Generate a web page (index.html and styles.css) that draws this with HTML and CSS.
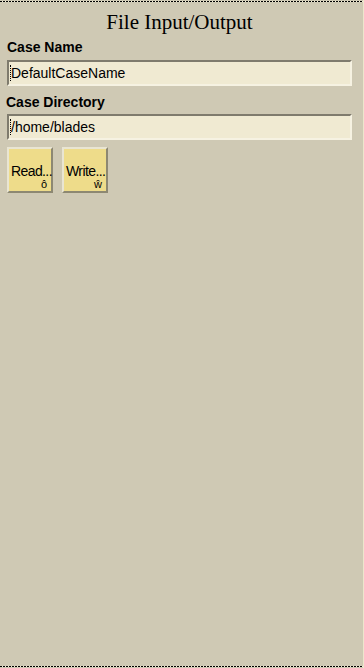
FILE: index.html
```
<!DOCTYPE html>
<html lang="en">
  <head>
    <meta charset="UTF-8" />
    <meta name="viewport" content="width=device-width, initial-scale=1.0" />
    <title>File Input/Output</title>
    <link rel="stylesheet" href="styles.css">
  </head>
  <body>
    <div class="window">
      <div class="rule"></div>

      <div class="panel">
        <h1 class="title">File Input/Output</h1>

        <label class="field-label" for="caseName">Case Name</label>
        <div class="field">
          <input type="text" id="caseName" value="DefaultCaseName" />
        </div>

        <label class="field-label" for="caseDir">Case Directory</label>
        <div class="field field-dir">
          <input type="text" id="caseDir" value="/home/blades" />
        </div>

        <div class="button-row">
          <button class="btn">
            <span class="btn-text">Read...</span>
            <span class="btn-key">ô</span>
          </button>
          <button class="btn">
            <span class="btn-text">Write...</span>
            <span class="btn-key">ŵ</span>
          </button>
        </div>
      </div>

      <div class="rule"></div>
    </div>
  </body>
</html>
```

FILE: styles.css
```
* {
  margin: 0;
  padding: 0;
  box-sizing: border-box;
}

body {
  background-color: #cfc9b4;
  font-family: "Liberation Sans", Arial, sans-serif;
  color: #000;
}

.window {
  height: 668px;
  display: flex;
  flex-direction: column;
  padding: 1px 0 1px 0;
  border-right: 1px solid #ece6cc;
}

.rule {
  height: 1px;
  background: repeating-linear-gradient(90deg, #000 0 2px, #f4efd8 2px 3px);
}

.panel {
  flex: 1;
  padding: 8px 11px 0 7px;
}

.title {
  font-family: "Liberation Serif", "Times New Roman", serif;
  font-weight: normal;
  font-size: 21px;
  line-height: 24px;
  text-align: center;
}

.field-label {
  display: block;
  font-size: 14px;
  font-weight: bold;
  line-height: 16px;
  margin-top: 5px;
}

.field-label[for="caseDir"] {
  margin-top: 8px;
  margin-left: -1px;
}

.field {
  position: relative;
  margin-top: 5px;
}

.field-dir {
  margin-top: 4px;
}

.field::before {
  content: "";
  position: absolute;
  left: 3px;
  top: 5px;
  height: 16px;
  border-left: 1px dotted #000;
}

.field input {
  display: block;
  width: 100%;
  height: 26px;
  padding: 0 0 0 2px;
  font-family: "Liberation Sans", Arial, sans-serif;
  font-size: 14px;
  line-height: 22px;
  color: #000;
  background-color: #f0ead2;
  border: 2px solid;
  border-color: #7f7b6d #f6f2e2 #f6f2e2 #7f7b6d;
  outline: none;
}

.button-row {
  display: flex;
  gap: 9px;
  margin-top: 7px;
}

.btn {
  position: relative;
  width: 46px;
  height: 46px;
  background-color: #eedc8a;
  border: 2px solid;
  border-color: #e9e5d2 #8d8872 #8d8872 #e9e5d2;
  font-family: "Liberation Sans", Arial, sans-serif;
  color: #000;
  text-align: left;
}

.btn-text {
  position: absolute;
  left: 2px;
  top: 15px;
  font-size: 14px;
  line-height: 14px;
  letter-spacing: -0.6px;
  white-space: nowrap;
}

.btn-key {
  position: absolute;
  right: 4px;
  bottom: 2px;
  font-size: 11px;
  line-height: 10px;
}
```
